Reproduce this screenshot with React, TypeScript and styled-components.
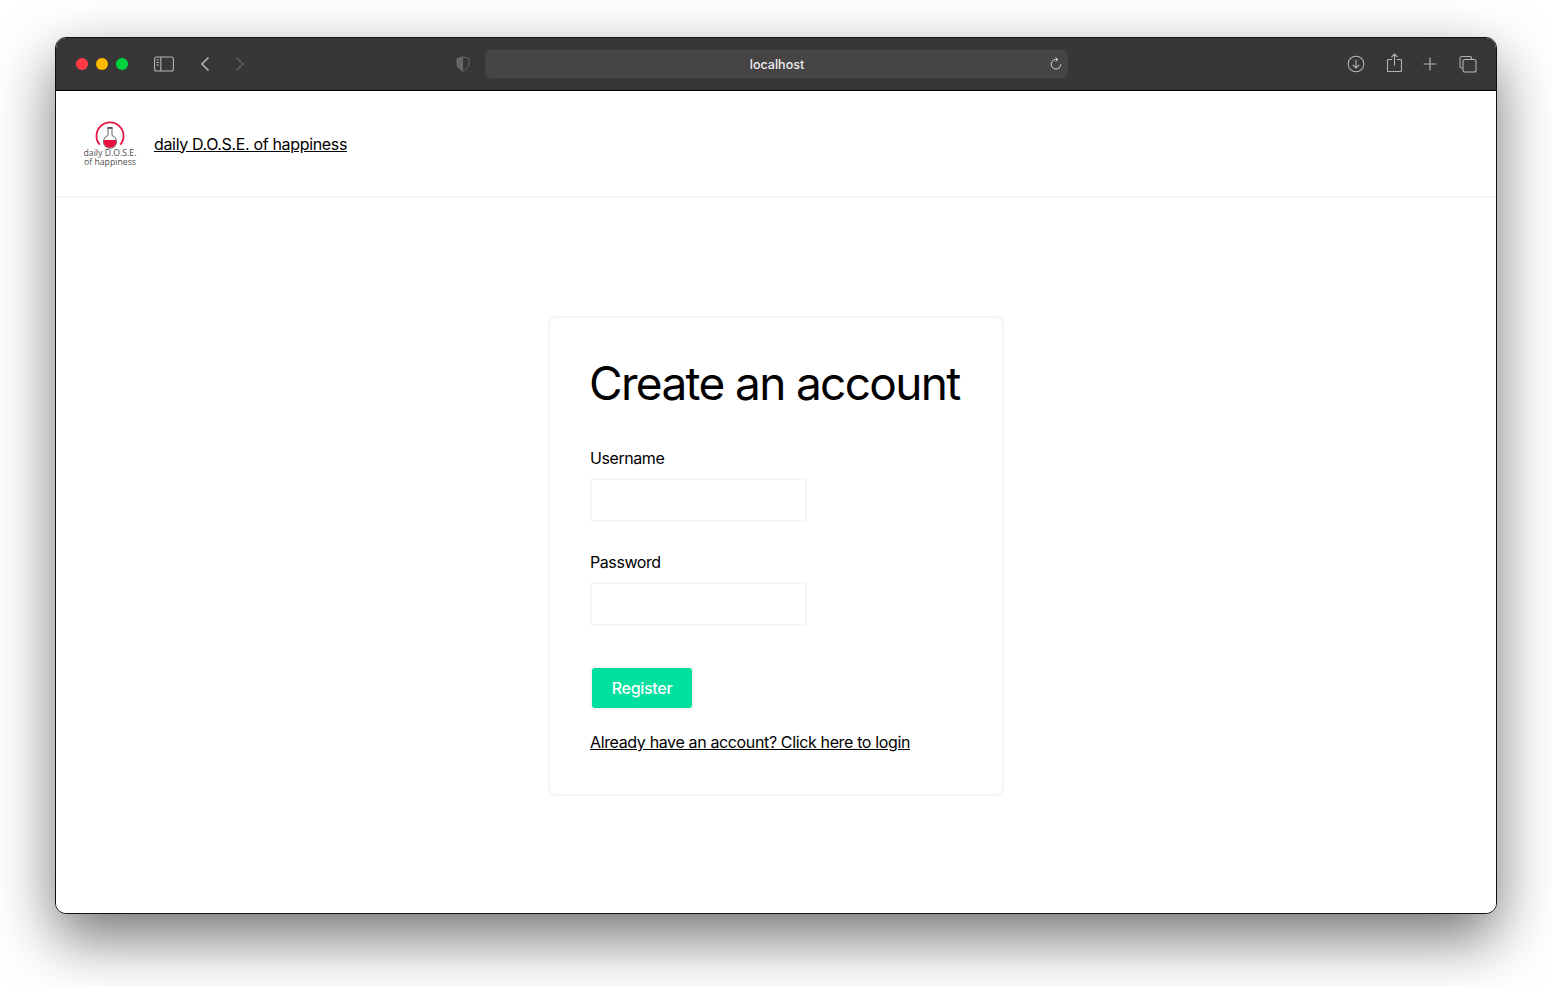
import React from "react"
import styled, { createGlobalStyle } from "styled-components"

const GlobalStyle = createGlobalStyle`
  html, body {
    margin: 0;
    padding: 0;
    background: #fff;
  }
  body {
    font-family: Inter, "Liberation Sans", sans-serif;
    color: #000;
    overflow: hidden;
  }
`

export default function App() {
  return (
    <Stage>
      <GlobalStyle />
      <BrowserWindow>
        <Toolbar>
          <ToolbarLeft>
            <Lights>
              <Light color="#ff3b47" />
              <Light color="#ffba00" />
              <Light color="#00d23f" />
            </Lights>
            <ToolIcon width="20" height="16" viewBox="0 0 20 16" left={26}>
              <rect x="0.6" y="1" width="18.8" height="14" rx="2" fill="none" stroke="#b5b5b5" strokeWidth="1.1" />
              <path d="M6.8 1v14" stroke="#b5b5b5" strokeWidth="1.1" />
              <path d="M2.5 4h2.5M2.5 6.5h2.5M2.5 9h2.5" stroke="#b5b5b5" strokeWidth="1.2" />
            </ToolIcon>
            <ToolIcon width="10" height="16" viewBox="0 0 10 16" left={26}>
              <path d="M8.5 1.5 2 8l6.5 6.5" fill="none" stroke="#b8b8b8" strokeWidth="1.5" />
            </ToolIcon>
            <ToolIcon width="10" height="16" viewBox="0 0 10 16" left={25}>
              <path d="M1.5 1.5 8 8l-6.5 6.5" fill="none" stroke="#5c5c5c" strokeWidth="1.5" />
            </ToolIcon>
          </ToolbarLeft>
          <ToolbarCenter>
            <svg width="14" height="16" viewBox="0 0 14 16">
              <path d="M7 .8 1 2.4v5.2c0 3.7 2.6 6.1 6 7.6 3.4-1.5 6-3.9 6-7.6V2.4z" fill="none" stroke="#666" strokeWidth="1" />
              <path d="M7 .8 1 2.4v5.2c0 3.7 2.6 6.1 6 7.6z" fill="#666" />
            </svg>
            <AddressBar>
              <AddressText>localhost</AddressText>
              <Reload width="12" height="14" viewBox="0 0 12 14">
                <path d="M7.2 2.6A4.8 4.8 0 1 0 10.8 7.4" fill="none" stroke="#d8d8d8" strokeWidth="1" />
                <path d="M5.6.6 7.8 2.6 5.6 4.5" fill="none" stroke="#d8d8d8" strokeWidth="1" />
              </Reload>
            </AddressBar>
          </ToolbarCenter>
          <ToolbarRight>
            <svg width="18" height="18" viewBox="0 0 18 18">
              <circle cx="9" cy="9" r="7.8" fill="none" stroke="#b5b5b5" strokeWidth="1.1" />
              <path d="M9 4.8v8M5.8 9.8 9 13l3.2-3.2" fill="none" stroke="#b5b5b5" strokeWidth="1.1" />
            </svg>
            <ShareIcon width="15" height="19" viewBox="0 0 15 19">
              <path d="M5 6.5H1.5a1 1 0 0 0-1 1v10a1 1 0 0 0 1 1h12a1 1 0 0 0 1-1v-10a1 1 0 0 0-1-1H10" fill="none" stroke="#b5b5b5" strokeWidth="1.1" />
              <path d="M7.5 12.5V1.2M4.5 4l3-3 3 3" fill="none" stroke="#b5b5b5" strokeWidth="1.1" />
            </ShareIcon>
            <svg width="14" height="14" viewBox="0 0 14 14">
              <path d="M7 .5v13M.5 7h13" stroke="#b5b5b5" strokeWidth="1.2" />
            </svg>
            <svg width="18" height="18" viewBox="0 0 18 18">
              <path d="M3.5 13H2.5A1.5 1.5 0 0 1 1 11.5v-8A2 2 0 0 1 3 1.5h8A1.5 1.5 0 0 1 12.5 3v1" fill="none" stroke="#b5b5b5" strokeWidth="1.1" />
              <rect x="4" y="4.5" width="13" height="12.5" rx="2" fill="none" stroke="#b5b5b5" strokeWidth="1.1" />
            </svg>
          </ToolbarRight>
        </Toolbar>
        <Page>
          <SiteHeader>
            <LogoSvg width="54" height="48" viewBox="0 0 54 48">
              <path d="M16.7 24.7a13.5 13.5 0 1 1 20.6 0" fill="none" stroke="#e8123f" strokeWidth="1.8" />
              <path d="M25 8h4v7.4a6.6 6.600 0 1 1-4 0z" fill="#fff" stroke="#555" strokeWidth="0.9" />
              <path d="M24.500 7h5v1.800h-5z" fill="#555" />
              <path d="M21 20h12a6 6 0 0 1-6 7.800 6 6 0 0 1-6-7.800z" fill="#e8123f" />
              <LogoText x="27" y="36">daily D.O.S.E.</LogoText>
              <LogoText x="27" y="45">of happiness</LogoText>
            </LogoSvg>
            <SiteLink href="#">daily D.O.S.E. of happiness</SiteLink>
          </SiteHeader>
          <Main>
            <Card>
              <Title>Create an account</Title>
              <Field>
                <Label>Username</Label>
                <Input type="text" />
              </Field>
              <Field>
                <Label>Password</Label>
                <Input type="password" />
              </Field>
              <SubmitButton type="button">Register</SubmitButton>
              <BottomLink href="#">Already have an account? Click here to login</BottomLink>
            </Card>
          </Main>
        </Page>
      </BrowserWindow>
    </Stage>
  )
}

const Stage = styled.div`
  box-sizing: border-box;
  width: 1552px;
  height: 987px;
  padding: 37px 55px 73px;
`

const BrowserWindow = styled.div`
  box-sizing: border-box;
  height: 100%;
  display: flex;
  flex-direction: column;
  border: 1px solid #111;
  border-radius: 11px;
  overflow: hidden;
  box-shadow: 0 24px 60px 0 rgba(0, 0, 0, 0.55);
  background: #fff;
`

const Toolbar = styled.div`
  flex: 0 0 53px;
  box-sizing: border-box;
  display: grid;
  grid-template-columns: 400px 612px 1fr;
  align-items: center;
  background: #383636;
  border-bottom: 1px solid #000;
`

const ToolbarLeft = styled.div`
  display: flex;
  align-items: center;
  padding-left: 20px;
`

const Lights = styled.div`
  display: flex;
  gap: 8px;
`

const Light = styled.span<{ color: string }>`
  width: 12px;
  height: 12px;
  border-radius: 50%;
  background: ${props => props.color};
`

const ToolIcon = styled.svg<{ left: number }>`
  margin-left: ${props => props.left}px;
`

const ToolbarCenter = styled.div`
  display: flex;
  align-items: center;
  gap: 15px;
`

const AddressBar = styled.div`
  flex: 1;
  height: 28px;
  display: flex;
  align-items: center;
  justify-content: center;
  position: relative;
  border-radius: 5px;
  background: #464444;
`

const AddressText = styled.span`
  padding: 1px 0 0 1px;
  font-size: 12.5px;
  font-weight: 500;
  color: #f0f0f0;
`

const Reload = styled.svg`
  position: absolute;
  right: 6px;
  top: 7px;
`

const ToolbarRight = styled.div`
  display: flex;
  align-items: center;
  justify-content: flex-end;
  gap: 22px;
  padding: 0 19px 1px 0;
`

const ShareIcon = styled.svg`
  margin: 0 -1px 2px 0;
`

const Page = styled.div`
  flex: 1;
  display: flex;
  flex-direction: column;
  background: #fff;
`

const SiteHeader = styled.header`
  box-sizing: border-box;
  flex: 0 0 107px;
  display: flex;
  align-items: center;
  gap: 17px;
  padding-left: 27px;
  border-bottom: 2px solid #f5f5f5;
`

const LogoSvg = styled.svg`
  display: block;
  margin-top: 1px;
`

const LogoText = styled.text`
  font-family: "Open Sans", "Liberation Sans", sans-serif;
  font-size: 8.7px;
  fill: #4d4d4d;
  text-anchor: middle;
`

const SiteLink = styled.a`
  font-size: 16px;
  line-height: 24px;
  letter-spacing: -0.34px;
  color: #000;
  text-decoration: underline;
`

const Main = styled.main`
  display: flex;
  justify-content: center;
  padding-top: 118px;
`

const Card = styled.div`
  box-sizing: border-box;
  width: 456px;
  height: 480px;
  padding: 40px;
  display: flex;
  flex-direction: column;
  align-items: flex-start;
  border: 2px solid #f5f5f5;
  border-radius: 8px;
`

const Title = styled.h1`
  margin: -1px 0 37px -1px;
  font-size: 46px;
  line-height: 52px;
  font-weight: 400;
  letter-spacing: -1.66px;
  white-space: nowrap;
`

const Field = styled.div`
  display: flex;
  flex-direction: column;
  margin-bottom: 28px;
`

const Label = styled.label`
  font-size: 16px;
  line-height: 24px;
  letter-spacing: -0.42px;
  margin-bottom: 8px;
`

const Input = styled.input`
  box-sizing: border-box;
  width: 217px;
  height: 44px;
  border: 2px solid #f5f5f5;
  border-radius: 2px;
  background: #fff;
  outline: none;
`

const SubmitButton = styled.button`
  box-sizing: border-box;
  width: 104px;
  height: 44px;
  margin-top: 12px;
  border: 2px solid #f5f5f5;
  border-radius: 4px;
  background: #00e09e;
  background-clip: padding-box;
  color: #fff;
  font-family: inherit;
  font-size: 16px;
  font-weight: 500;
  letter-spacing: -0.3px;
`

const BottomLink = styled.a`
  margin-top: 20px;
  font-size: 16px;
  line-height: 24px;
  letter-spacing: -0.36px;
  color: #000;
  text-decoration: underline;
`
